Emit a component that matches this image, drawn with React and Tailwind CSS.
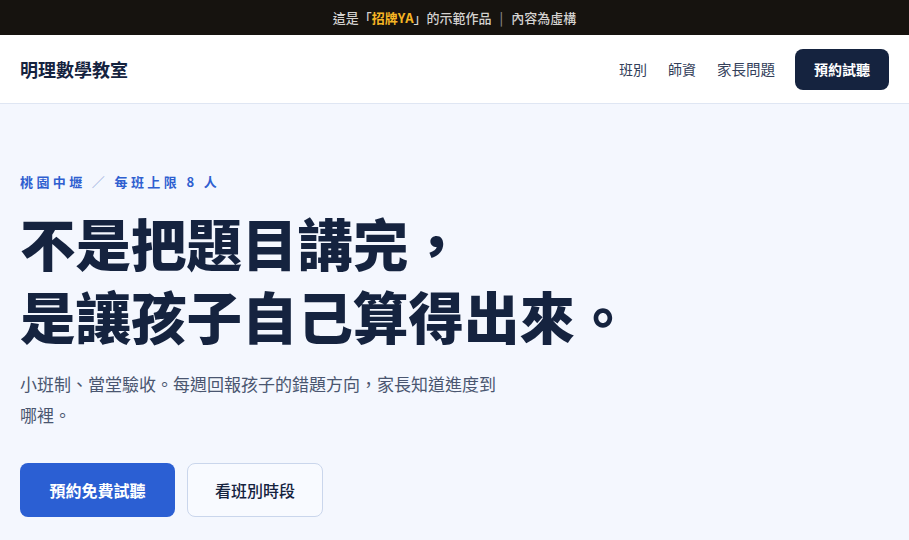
export default function App() {
  const font = { fontFamily: '"Noto Sans CJK TC", "Noto Sans", sans-serif' };
  return (
    <div className="min-h-[540px] bg-[#f4f7fe]" style={font}>
      <div className="h-[35px] bg-[#16130f] flex items-center justify-center text-[13px] font-medium text-[#d4d2cf]">
        <span>這是「<span className="text-[#f5b524] font-bold">招牌YA</span>」的示範作品</span>
        <span className="mx-2 text-[#8a8782]">|</span>
        <span>內容為虛構</span>
      </div>
      <header className="h-[69px] bg-white border-b border-[#dfe6f3] flex items-center justify-between pl-5 pr-5">
        <div className="text-[18px] font-bold text-[#15233f]">明理數學教室</div>
        <nav className="flex items-center">
          <a className="text-[14px] text-[#33405a]">班別</a>
          <a className="ml-[21px] text-[14px] text-[#33405a]">師資</a>
          <a className="ml-[21px] text-[14.5px] text-[#33405a]">家長問題</a>
          <button className="ml-5 h-[41px] w-[94px] rounded-lg bg-[#15233f] text-white text-[14px] font-bold">預約試聽</button>
        </nav>
      </header>
      <main className="px-5 pt-[68px]">
        <div className="text-[13px] font-bold text-[#2f5fd0] tracking-[0.26em] leading-[20px]">
          桃園中壢 <span className="text-[#9bb0e0] font-normal">／</span> 每班上限 8 人
        </div>
        <h1 className="mt-[14px] text-[55.5px] leading-[73px] font-black text-[#15233f]">
          不是把題目講完，<br />是讓孩子自己算得出來。
        </h1>
        <p className="mt-[16px] text-[17px] leading-[31px] text-[#4a5670] max-w-[482px]">
          小班制、當堂驗收。每週回報孩子的錯題方向，家長知道進度到哪裡。
        </p>
        <div className="mt-[33px] flex gap-3">
          <button className="h-[54px] w-[155px] rounded-lg bg-[#2b5fd3] text-white text-[16px] font-bold">預約免費試聽</button>
          <button className="h-[54px] w-[136px] rounded-lg border border-[#cad6ec] bg-[#f8faff] text-[#15233f] text-[16px] font-medium">看班別時段</button>
        </div>
      </main>
    </div>
  );
}
